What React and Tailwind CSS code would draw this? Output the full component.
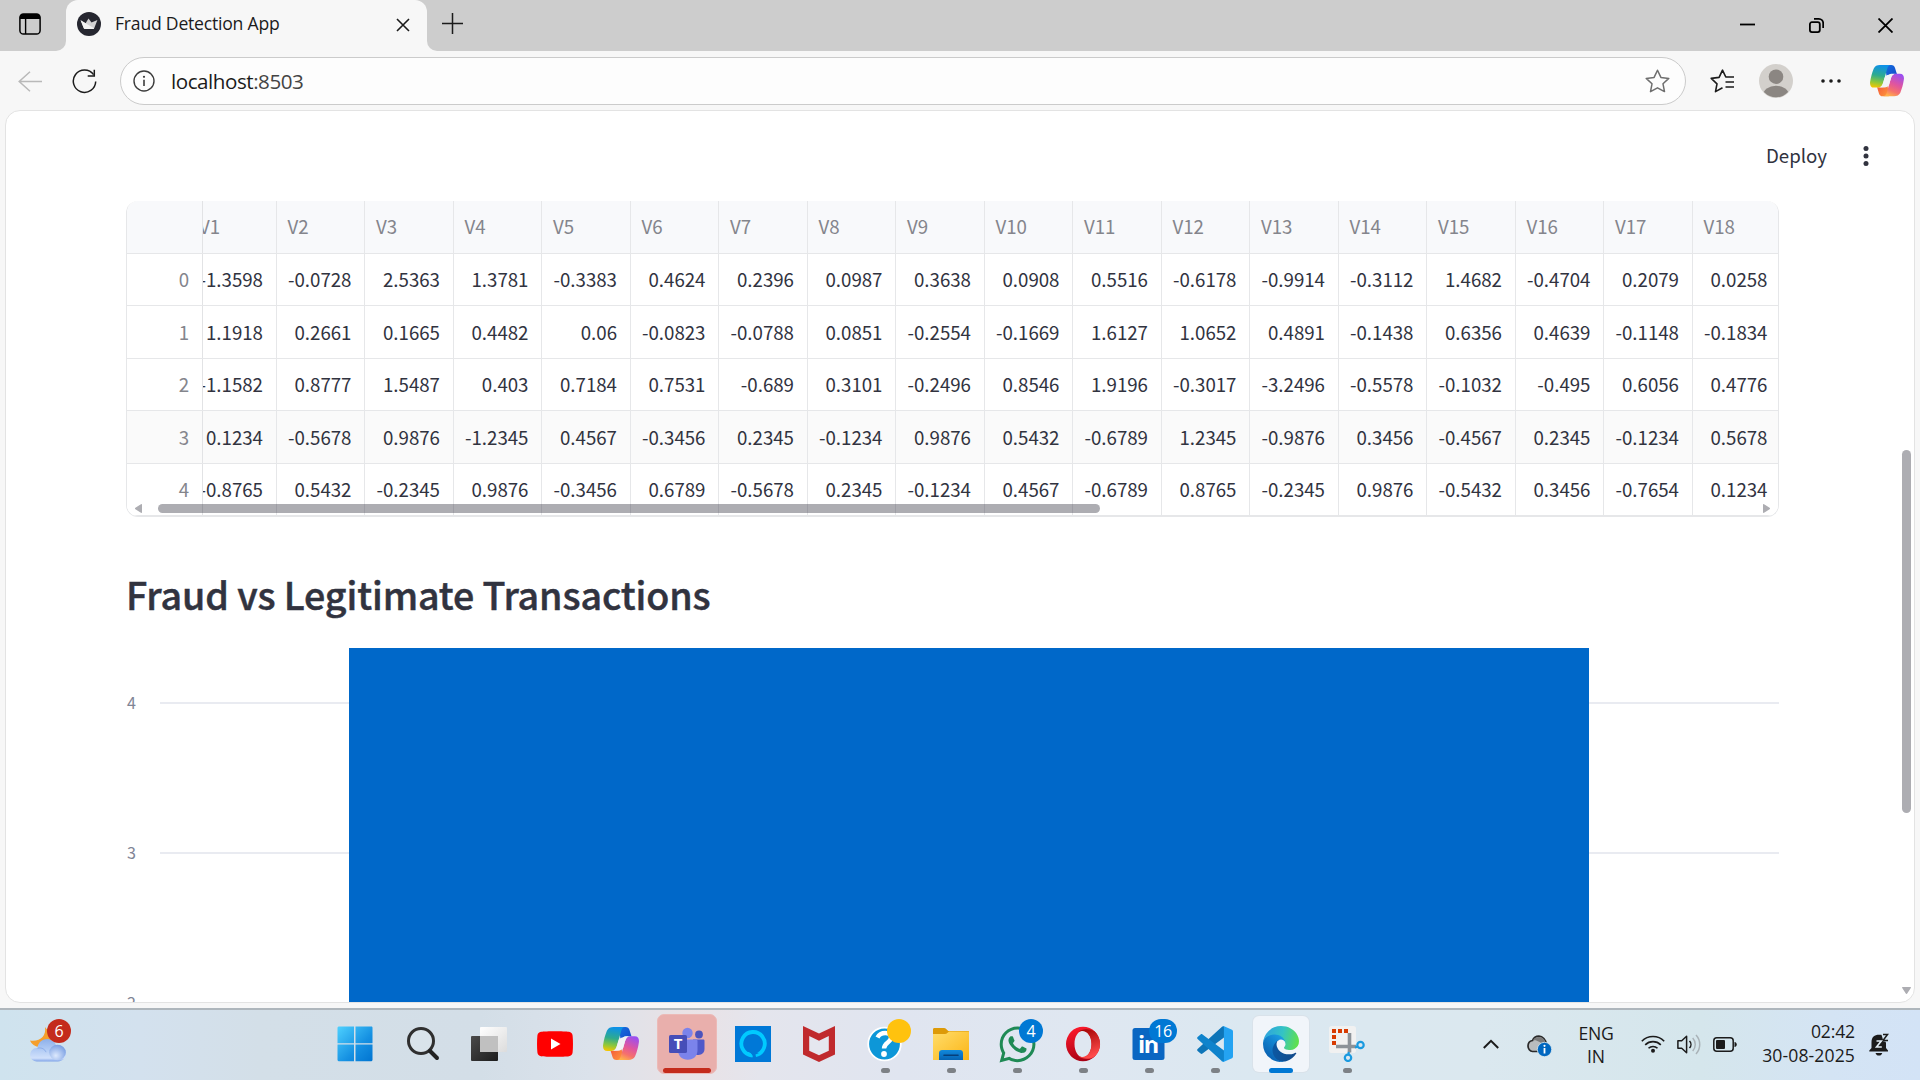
import React from "react";
import { FaWhatsapp } from "react-icons/fa";

const columns = Array.from({ length: 18 }, (_, i) => `V${i + 1}`);

const rows = [
  ["-1.3598", "-0.0728", "2.5363", "1.3781", "-0.3383", "0.4624", "0.2396", "0.0987", "0.3638", "0.0908", "0.5516", "-0.6178", "-0.9914", "-0.3112", "1.4682", "-0.4704", "0.2079", "0.0258"],
  ["1.1918", "0.2661", "0.1665", "0.4482", "0.06", "-0.0823", "-0.0788", "0.0851", "-0.2554", "-0.1669", "1.6127", "1.0652", "0.4891", "-0.1438", "0.6356", "0.4639", "-0.1148", "-0.1834"],
  ["-1.1582", "0.8777", "1.5487", "0.403", "0.7184", "0.7531", "-0.689", "0.3101", "-0.2496", "0.8546", "1.9196", "-0.3017", "-3.2496", "-0.5578", "-0.1032", "-0.495", "0.6056", "0.4776"],
  ["0.1234", "-0.5678", "0.9876", "-1.2345", "0.4567", "-0.3456", "0.2345", "-0.1234", "0.9876", "0.5432", "-0.6789", "1.2345", "-0.9876", "0.3456", "-0.4567", "0.2345", "-0.1234", "0.5678"],
  ["-0.8765", "0.5432", "-0.2345", "0.9876", "-0.3456", "0.6789", "-0.5678", "0.2345", "-0.1234", "0.4567", "-0.6789", "0.8765", "-0.2345", "0.9876", "-0.5432", "0.3456", "-0.7654", "0.1234"],
];

/* ---------- Browser chrome ---------- */

function TabBar() {
  return (
    <div className="flex h-[51px] shrink-0 bg-[#f7f7f7]">
      <div className="flex w-[66px] items-center rounded-br-[10px] bg-[#cdcdcd] pl-[19px] pb-[3px]">
        <svg width="22" height="22" viewBox="0 0 22 22" fill="none">
          <rect x="0.9" y="0.9" width="20.2" height="20.2" rx="3.6" stroke="#000" strokeWidth="1.5" />
          <path d="M1 6V4a3 3 0 0 1 3-3h14a3 3 0 0 1 3 3v2z" fill="#000" />
          <path d="M6.6 5.5V21" stroke="#000" strokeWidth="1.4" />
        </svg>
      </div>
      <div className="w-[361px] bg-[#cdcdcd]">
        <div className="flex h-full items-center rounded-t-[12px] bg-[#f7f7f7] pl-[11px] pr-[17px] pb-[3px]">
          <svg width="24" height="24" viewBox="0 0 24 24">
            <circle cx="12" cy="12" r="12" fill="#262730" />
            <path d="M3.6 8.2l5 3 2.900-4.600 3 4 5.900-2.700-2.900 7.600c-.3 1.100-1 1.600-2 1.600H8.400c-1 0-1.500-.5-1.800-1.400z" fill="#d2d2d4" />
            <path d="M8.600 11.200l8.500 5c-.4.7-1 .9-1.600.9H8.400c-1 0-1.500-.5-1.800-1.400L3.600 8.200z" fill="#f3f3f3" />
          </svg>
          <span className="ml-[14px] mb-[2px] whitespace-nowrap text-[17.6px] tracking-[-0.22px] text-[#1b1b1b]">Fraud Detection App</span>
          <svg className="ml-auto mt-[2px]" width="14" height="14" viewBox="0 0 14 14" stroke="#1b1b1b" strokeWidth="1.6">
            <path d="M1 1l12 12M13 1L1 13" />
          </svg>
        </div>
      </div>
      <div className="flex grow items-center rounded-bl-[10px] bg-[#cdcdcd] pb-[4px] pl-[15px] pr-[27px]">
        <svg width="21" height="21" viewBox="0 0 21 21" stroke="#1b1b1b" strokeWidth="1.5">
          <path d="M10.5 0v21M0 10.5h21" />
        </svg>
        <div className="mt-[3px] ml-auto flex items-center gap-[54px]">
          <svg width="15" height="15" viewBox="0 0 15 15" stroke="#000" strokeWidth="1.8"><path d="M0 6.500h15" /></svg>
          <svg width="15" height="15" viewBox="0 0 15 15" fill="none" stroke="#000" strokeWidth="1.8">
            <rect x="0.9" y="4.200" width="9.900" height="9.900" rx="2" />
            <path d="M5 .9h4.800a4.400 4.400 0 0 1 4.400 4.400V10" />
          </svg>
          <svg width="15" height="15" viewBox="0 0 15 15" stroke="#000" strokeWidth="1.8"><path d="M.5.5l14 14M14.500.5l-14 14" /></svg>
        </div>
      </div>
    </div>
  );
}

function CopilotIcon({ size, id }) {
  return (
    <svg width={size} height={size * 0.92} viewBox="0 0 36 33" className="shrink-0">
      <defs>
        <linearGradient id={`${id}a`} x1="0.4" y1="0" x2="0.25" y2="1">
          <stop offset="0" stopColor="#0d91e8" />
          <stop offset="0.45" stopColor="#2eab8e" />
          <stop offset="0.75" stopColor="#8cc73c" />
          <stop offset="1" stopColor="#f7c600" />
        </linearGradient>
        <linearGradient id={`${id}b`} x1="0.7" y1="0" x2="0.3" y2="1">
          <stop offset="0" stopColor="#9b4ff0" />
          <stop offset="0.45" stopColor="#e0559f" />
          <stop offset="0.75" stopColor="#f5716c" />
          <stop offset="1" stopColor="#ffb24a" />
        </linearGradient>
        <linearGradient id={`${id}c`} x1="0" y1="0" x2="1" y2="1">
          <stop offset="0" stopColor="#1470e0" />
          <stop offset="1" stopColor="#1447c8" />
        </linearGradient>
        <linearGradient id={`${id}d`} x1="0" y1="0" x2="1" y2="1">
          <stop offset="0" stopColor="#f2503b" />
          <stop offset="1" stopColor="#ff9a3c" />
        </linearGradient>
      </defs>
      <path d="M16 0h6.500c2.200 0 3.400 1.100 4 3l2 6.500h-5c-3.200 0-4.800 1.300-5.800 4.500z" fill={`url(#${id}c)`} />
      <path d="M20 33h-6.500c-2.200 0-3.400-1.100-4-3l-2-6.500h5c3.200 0 4.800-1.300 5.800-4.500z" fill={`url(#${id}d)`} />
      <path d="M10.500 0H22c-2 0-3 1.500-3.600 3.300L14 18.500c-1 3.400-2.400 5.400-5.800 5.400H4.300C1 23.900-.3 21.500.1 18c.8-5.500 2.100-10 3.800-14.200C5.200 1 7.500 0 10.500 0z" fill={`url(#${id}a)`} />
      <path d="M25.500 33H14c2 0 3-1.500 3.600-3.300L22 14.500c1-3.400 2.400-5.300 5.800-5.300h3.900c3.300 0 4.600 2.400 4.200 5.900-.8 5.500-2.100 10-3.800 14.200C30.800 32 28.500 33 25.500 33z" fill={`url(#${id}b)`} />
      <path d="M19.800 10.400c1-.8 2.200-1.200 3.900-1.200h4c-3.300 0-4.700 1.900-5.700 5.300l-1.700 6c-1 2.200-2.600 3-5 3.300H8.500c3.200 0 4.600-2 5.500-5.300l1.300-4.500c.8-2.300 2.300-3.400 4.500-3.600z" fill="#f1f3f6" />
    </svg>
  );
}

function Toolbar() {
  return (
    <div className="flex h-[59px] shrink-0 items-start bg-[#f7f7f7] pt-[6px] pl-[18px] pr-[16px]">
      <div className="flex h-[48px] items-center">
        <svg width="24" height="21" viewBox="0 0 24 21" fill="none" stroke="#b9b9b9" strokeWidth="1.5">
          <path d="M12 .7L1.200 10.500 12 20.300M1.200 10.500H24" />
        </svg>
        <svg className="ml-[30px]" width="25" height="25" viewBox="0 0 25 25" fill="none" stroke="#1b1b1b" strokeWidth="1.5">
          <path d="M21.600 5.600A11.200 11.200 0 1 0 23.700 12.500" />
          <path d="M22.300 .8V7h-6.600" />
        </svg>
      </div>
      <div className="ml-[23px] flex h-[48px] w-[1566px] items-center rounded-full border border-[#cbcbcb] bg-[#fdfdfd] pl-[12px] pr-[15px]">
        <svg width="22" height="22" viewBox="0 0 22 22" fill="none">
          <circle cx="11" cy="11" r="10" stroke="#3c3c3c" strokeWidth="1.4" />
          <path d="M11 9.800V16" stroke="#3c3c3c" strokeWidth="1.6" />
          <circle cx="11" cy="6.800" r="1.100" fill="#3c3c3c" />
        </svg>
        <span className="ml-[16px] text-[20.6px] tracking-[-0.46px] text-[#1b1b1b]">localhost<span className="text-[#444]">:8503</span></span>
        <svg className="ml-auto" width="25" height="24" viewBox="0 0 25 24" fill="none" stroke="#6e6e6e" strokeWidth="1.5" strokeLinejoin="round">
          <path d="M12.500 1.200l3.400 7.200 7.900 1-5.800 5.400 1.500 7.800-7-3.800-7 3.800L7 14.800 1.200 9.400l7.900-1z" />
        </svg>
      </div>
      <div className="flex h-[48px] items-center">
        <svg className="ml-[24px]" width="25" height="24" viewBox="0 0 25 24" fill="none" stroke="#1b1b1b" strokeWidth="1.6" strokeLinejoin="round">
          <path d="M24 8h-8.200L12.500 1.200 9.100 8.400l-7.900 1L7 14.800l-1.500 7.800 7-3.800M15.500 13H24M15.500 18H24" />
        </svg>
        <svg className="ml-[24px]" width="34" height="34" viewBox="0 0 34 34">
          <clipPath id="avatar"><circle cx="17" cy="17" r="16.300" /></clipPath>
          <circle cx="17" cy="17" r="17" fill="#d3d0cc" />
          <circle cx="17" cy="12.700" r="7.300" fill="#8b8682" />
          <ellipse cx="17" cy="31.500" rx="13" ry="9.800" fill="#8b8682" clipPath="url(#avatar)" />
        </svg>
        <svg className="ml-[28px]" width="20" height="4" viewBox="0 0 20 4" fill="#1b1b1b">
          <circle cx="2" cy="2" r="1.800" /><circle cx="10" cy="2" r="1.800" /><circle cx="18" cy="2" r="1.800" />
        </svg>
        <div className="ml-[29px]"><CopilotIcon size={34} id="top" /></div>
      </div>
    </div>
  );
}

/* ---------- Page content ---------- */

function DataTable() {
  return (
    <div className="relative h-[316px] w-[1653px] overflow-hidden rounded-[12px] border border-t-0 border-[#e6e7e9] text-[18.7px] text-[#31333f]">
      <div className="flex h-[52.5px] border-b border-[#e6e7e9] bg-[#f8f9fb] text-[#84858c]">
        <div className="w-[76px] shrink-0 border-r border-[#e2e3e5]" />
        <div className="flex overflow-hidden">
          {columns.map((c, i) => (
            <div key={c} className={`flex w-[88.5px] shrink-0 items-center border-r border-[#e6e7e9] pb-[1px] pl-[11px] ${i === 0 ? "-ml-[15px]" : ""}`}>
              {c}
            </div>
          ))}
        </div>
      </div>
      {rows.map((r, ri) => (
        <div key={ri} className={`flex h-[52.5px] border-b border-[#e6e7e9] ${ri === 3 ? "bg-[#fafafa]" : "bg-white"}`}>
          <div className="flex w-[76px] shrink-0 items-center justify-end border-r border-[#e2e3e5] pr-[13px] text-[#84858c]">{ri}</div>
          <div className="flex overflow-hidden">
            {r.map((v, i) => (
              <div key={i} className={`flex w-[88.5px] shrink-0 items-center justify-end border-r border-[#e6e7e9] pr-[12.5px] ${i === 0 ? "-ml-[15px]" : ""}`}>
                {v}
              </div>
            ))}
          </div>
        </div>
      ))}
      <div className="absolute bottom-[3px] left-[8px] right-[8px] flex h-[9px] items-center">
        <svg width="7" height="9" viewBox="0 0 7 9" fill="#adadb2"><path d="M7 0v9L5.500 8.500.4 5.200a.8.800 0 0 1 0-1.400L5.500.5z" /></svg>
        <div className="ml-[16px] h-[9px] w-[942px] rounded-full bg-[#31333f]/40" />
        <svg className="ml-auto" width="7" height="9" viewBox="0 0 7 9" fill="#adadb2"><path d="M0 0v9l1.500-.5 5.100-3.300a.8.800 0 0 0 0-1.400L1.500.5z" /></svg>
      </div>
    </div>
  );
}

function GridLine({ label }) {
  return (
    <div className="flex h-[150px] items-start">
      <span className="w-[34px] shrink-0 pl-[1px] text-[16.1px] leading-[18px] text-[#808495]">{label}</span>
      <div className="mt-[9px] h-[2px] grow bg-[#e9ebf1]" />
    </div>
  );
}

function BarChart() {
  return (
    <div className="relative mt-[24px] h-[356px] w-[1653px] overflow-hidden">
      <div className="pt-[45px]">
        <GridLine label="4" />
        <GridLine label="3" />
        <GridLine label="2" />
      </div>
      <div className="absolute top-0 bottom-0 left-[223px] w-[1240px] bg-[#0068c9]" />
    </div>
  );
}

function Page() {
  return (
    <div className="mx-[5px] flex h-[893px] shrink-0 overflow-hidden rounded-[15px] border border-[#e3e3e3] bg-white font-['Noto_Sans_CJK_SC',sans-serif] text-[#31333f]">
      <div className="w-[1773px] pl-[120px]">
        <div className="flex h-[90px] w-[1760px] items-center justify-end">
          <span className="mr-[35px] mb-[2px] w-[62px] text-[18.7px]">Deploy</span>
          <svg className="mr-[17px]" width="6" height="20" viewBox="0 0 6 20" fill="#31333f">
            <circle cx="3" cy="2.500" r="2.500" /><circle cx="3" cy="10" r="2.500" /><circle cx="3" cy="17.500" r="2.500" />
          </svg>
        </div>
        <DataTable />
        <h2 className="mt-[47px] h-[60px] whitespace-nowrap text-[37.6px] leading-[60px] font-medium tracking-[-0.11px] [-webkit-text-stroke:0.5px_#31333f]">Fraud vs Legitimate Transactions</h2>
        <BarChart />
      </div>
      <div className="ml-auto flex w-[12px] flex-col items-center pr-[3px]">
        <div className="mt-[339px] h-[363px] w-[9px] shrink-0 rounded-full bg-[#adadb2]" />
        <svg className="mt-auto mb-[8px]" width="9" height="7" viewBox="0 0 9 7" fill="#adadb2"><path d="M0 0h9L8.500 1.500 5.200 6.600a.8.800 0 0 1-1.400 0L.5 1.500z" /></svg>
      </div>
    </div>
  );
}

/* ---------- Taskbar ---------- */

const StartIcon = () => (
  <svg width="36" height="36" viewBox="0 0 36 36">
    <defs><linearGradient id="win" x1="0" y1="0" x2="36" y2="36" gradientUnits="userSpaceOnUse"><stop stopColor="#4fd2ff" /><stop offset="0.6" stopColor="#1590e2" /><stop offset="1" stopColor="#0073d0" /></linearGradient></defs>
    <path d="M1.500.5H17v16.700H.5V1.500zM18.500.5H35l.5 1v15.700h-17zM.5 18.500H17v16.700H1.500l-1-1zM18.500 18.500h17v15.700l-1 1h-16z" fill="url(#win)" />
  </svg>
);

const SearchIcon = () => (
  <svg width="34" height="36" viewBox="0 0 34 36" fill="none" strokeLinecap="round">
    <circle cx="15" cy="15" r="12.500" stroke="#2f2f2f" strokeWidth="3" fill="#fff" fillOpacity="0.15" />
    <path d="M24 25l7 7" stroke="#222" strokeWidth="4" />
  </svg>
);

const TaskViewIcon = () => (
  <svg width="36" height="36" viewBox="0 0 36 36">
    <defs>
      <linearGradient id="tv" x1="0" y1="0" x2="1" y2="1"><stop stopColor="#4a4a4a" /><stop offset="1" stopColor="#1c1c1c" /></linearGradient>
      <linearGradient id="tw" x1="0" y1="0" x2="1" y2="1"><stop stopColor="#fff" /><stop offset="1" stopColor="#dcdcdc" /></linearGradient>
    </defs>
    <rect x="0" y="10" width="27" height="25" rx="1" fill="url(#tv)" />
    <rect x="9" y="1" width="27" height="25" rx="1" fill="url(#tw)" />
    <rect x="9" y="10" width="18" height="16" fill="#c0c0c0" />
  </svg>
);

const YouTubeIcon = () => (
  <svg width="36" height="36" viewBox="0 0 36 36">
    <path d="M4 5.800c5-.8 23-.8 28 0 2 .3 3.300 1.500 3.600 3.700.5 5 .5 12 0 17-.3 2.200-1.600 3.400-3.600 3.700-5 .8-23 .8-28 0-2-.3-3.300-1.500-3.600-3.700-.5-5-.5-12 0-17C.7 7.300 2 6.100 4 5.800z" fill="#f00" />
    <path d="M14 12.500l9.500 5.500-9.500 5.500z" fill="#fff" />
  </svg>
);

const TeamsIcon = () => (
  <svg width="36" height="36" viewBox="0 0 36 36">
    <circle cx="30" cy="8.500" r="3.900" fill="#4b53bc" />
    <circle cx="18.500" cy="7" r="5.200" fill="#7b83eb" />
    <path d="M24 13.500h10.200c.8 0 1.300.5 1.300 1.300v8c0 4-2.700 6.200-6 6.200S24 27 24 23z" fill="#5059c9" />
    <path d="M9 13.500h18c1 0 1.500.6 1.500 1.500v9c0 6-4 9.800-9.700 9.800S9 30 9 24z" fill="#7b83eb" />
    <rect x="0" y="9" width="18" height="18" rx="1.600" fill="#464eb8" />
    <text x="9" y="23.200" textAnchor="middle" fill="#fff" fontSize="15" fontWeight="700" fontFamily="Open Sans">T</text>
  </svg>
);

const AlexaIcon = () => (
  <svg width="36" height="36" viewBox="0 0 36 36">
    <path d="M0 0h36v36H0z" fill="#0078d7" />
    <path d="M16.700 29.300A11.700 11.700 0 1 1 20.600 29.100" fill="none" stroke="#00caff" strokeWidth="3.800" />
    <path d="M16.300 31c.3-3.200-.4-4-2.300-5l4-1 6 2-6 2.500z" fill="#0078d7" />
    <path d="M14.900 30.900c1 .2 2 .3 3 .3-.2-2.500-1.400-4-4.500-5.300l-2.200.6z" fill="#00caff" />
  </svg>
);

const McAfeeIcon = () => (
  <svg width="36" height="36" viewBox="0 0 36 36">
    <path d="M2 0l16 7.500L34 0v28.500L18 36 2 28.500z" fill="#c02a2d" />
    <path d="M8.200 10L18 14.700 27.800 10v14.700L18 29.300 8.200 24.700z" fill="#e5e7ef" />
  </svg>
);

const HelpIcon = () => (
  <svg width="36" height="36" viewBox="0 0 36 36" className="overflow-visible">
    <circle cx="17.500" cy="18" r="16.300" fill="#0d97d8" stroke="#fff" strokeWidth="1.800" />
    <path d="M10.500 11.500c3-6 13.500-6 13.500 0 0 5-7 5-7 11" fill="none" stroke="#fff" strokeWidth="4.400" />
    <circle cx="17" cy="28" r="2.900" fill="#fff" />
  </svg>
);

const FolderIcon = () => (
  <svg width="36" height="36" viewBox="0 0 36 36">
    <defs><linearGradient id="fold" x1="0" y1="0" x2="1" y2="1"><stop stopColor="#ffdd6b" /><stop offset="1" stopColor="#fbb516" /></linearGradient><linearGradient id="fold2" x1="0" y1="0" x2="0" y2="1"><stop stopColor="#1189dc" /><stop offset="1" stopColor="#0664b4" /></linearGradient></defs>
    <path d="M0 3.500C0 2.500.6 2 1.500 2H11c1 0 1.600.4 2.200 1l2 2H35c.7 0 1 .4 1 1v6H0z" fill="#dd9a08" />
    <path d="M0 8h12c1 0 1.700-.3 2.300-.9L16 5.500h19c.7 0 1 .3 1 1V34H0z" fill="url(#fold)" />
    <path d="M6 34V27c0-2 1.300-3 3-3h18c1.800 0 3 1 3 3v7z" fill="url(#fold2)" />
    <path d="M11 29.300h14" stroke="#063f7a" strokeWidth="1.600" strokeLinecap="round" />
  </svg>
);

const WhatsAppIcon = () => <FaWhatsapp size={41} color="#1f8a55" />;

const OperaIcon = () => (
  <svg width="36" height="36" viewBox="0 0 36 36">
    <defs>
      <linearGradient id="op1" x1="0.2" y1="0" x2="0.5" y2="1"><stop stopColor="#ff1b2d" /><stop offset="1" stopColor="#a70014" /></linearGradient>
      <linearGradient id="op2" x1="0" y1="0" x2="0.3" y2="1"><stop stopColor="#9c0000" /><stop offset="1" stopColor="#ff4b4b" /></linearGradient>
    </defs>
    <path fillRule="evenodd" d="M18 .8a17 17.200 0 1 0 0 34.400 17 17.200 0 1 0 0-34.400zM18 4.800c5 0 8.500 6 8.500 13.200S23 31.200 18 31.200 9.500 25.200 9.500 18 13 4.800 18 4.800z" fill="url(#op1)" />
    <path d="M13.500 5.900C16.600 2.700 24 2 29.500 5.300A17.200 17.200 0 0 1 29.500 30.700C24 34 16.600 33.300 13.500 30.100c6.500 3.300 13-2.600 13-12.100s-6.500-15.400-13-12.100z" fill="url(#op2)" />
  </svg>
);

const LinkedInIcon = () => (
  <svg width="36" height="36" viewBox="0 0 36 36">
    <rect x="1.500" y="2" width="32" height="32" rx="2.500" fill="#0a66c2" />
    <text x="17" y="27" textAnchor="middle" fill="#fff" fontSize="23.500" fontWeight="700" fontFamily="Open Sans" letterSpacing="-1.200">in</text>
  </svg>
);

const CodeIcon = () => (
  <svg width="36" height="36" viewBox="0 0 36 36">
    <path d="M27 0v11.500L5.500 27.600c-.6.5-1.300.5-1.900 0L.6 24.900c-.6-.6-.6-1.400 0-2L25 .8z" fill="#0e75b8" />
    <path d="M27 36V24.500L5.500 8.400c-.6-.5-1.300-.5-1.900 0L.6 11.100c-.6.6-.6 1.400 0 2L25 35.200z" fill="#0f83cc" />
    <path d="M26.500 0L35 3.800c.7.300 1 .9 1 1.600v25.200c0 .7-.3 1.300-1 1.600L26.500 36c-1 .2-1.500 0-2-.5 1 .4 2.400 0 2.400-1.300V1.800c0-1.300-1.400-1.700-2.400-1.300.5-.5 1-.7 2-.5z" fill="#24a3f2" />
  </svg>
);

const EdgeIcon = () => (
  <svg width="36" height="36" viewBox="0 0 256 256">
    <defs>
      <linearGradient id="e1" x1="58" y1="177" x2="236" y2="177" gradientUnits="userSpaceOnUse"><stop stopColor="#0c59a4" /><stop offset="1" stopColor="#114a8b" /></linearGradient>
      <linearGradient id="e2" x1="150" y1="90" x2="40" y2="220" gradientUnits="userSpaceOnUse"><stop stopColor="#1b9de2" /><stop offset="0.4" stopColor="#1384d0" /><stop offset="1" stopColor="#0b63b3" /></linearGradient>
      <linearGradient id="e3" x1="20" y1="60" x2="250" y2="120" gradientUnits="userSpaceOnUse"><stop stopColor="#2ea5dd" /><stop offset="0.5" stopColor="#34c3c5" /><stop offset="1" stopColor="#5fe04e" /></linearGradient>
    </defs>
    <g transform="translate(-4.600 -4.900)">
      <path d="M235.700 195.500a93.700 93.700 0 0 1-10.600 4.700 101.900 101.900 0 0 1-35.900 6.400c-47.300 0-88.500-32.500-88.500-74.300a31.500 31.500 0 0 1 16.400-27.300c-42.800 1.800-53.800 46.400-53.800 72.500 0 74 68.100 81.400 82.800 81.400 7.900 0 19.800-2.300 27-4.600l1.300-.4a128.300 128.300 0 0 0 66.600-52.800 4 4 0 0 0-5.300-5.600z" fill="url(#e1)" />
      <path d="M110.300 246.300A79.200 79.200 0 0 1 87.600 225a80.700 80.700 0 0 1 29.500-120c3.200-1.500 8.500-4.100 15.600-4a32.400 32.400 0 0 1 25.700 13 31.900 31.900 0 0 1 6.300 18.700c0-.2 24.500-79.600-80-79.600-43.900 0-80 41.600-80 78.200a130.200 130.200 0 0 0 12.100 56 128 128 0 0 0 156.400 67 75.500 75.500 0 0 1-62.800-8z" fill="url(#e2)" />
      <path d="M156.900 153.800c-.8 1-3.400 2.500-3.400 5.600 0 2.600 1.700 5.200 4.800 7.300 14.300 10 41.400 8.600 41.500 8.600a59.600 59.600 0 0 0 30.300-8.300 61.400 61.400 0 0 0 30.400-52.900c.3-22.400-8-37.300-11.300-43.900C228 28.800 182.300 4.900 132.600 4.900a128 128 0 0 0-128 126.200c.5-36.500 36.800-66 80-66 3.500 0 23.500.3 42 10a72.600 72.600 0 0 1 30.900 29.300c6.100 10.600 7.200 24.100 7.200 29.500s-2.700 13.300-7.800 19.900z" fill="url(#e3)" />
    </g>
  </svg>
);

const SnipIcon = () => (
  <svg width="36" height="36" viewBox="0 0 36 36">
    <rect x="0" y="0" width="27" height="27" rx="2.500" fill="#f1f1f1" />
    <g fill="#d83b01">
      <path d="M3 3h4v4H3zM9 3h4v4H9zM15 3h4v4h-4zM3 9h4v4H3zM3 15h4v4H3z" />
    </g>
    <path d="M20.500 7v19.500M7 20.500h20" stroke="#8c9298" strokeWidth="3.600" fill="none" />
    <circle cx="31.500" cy="19" r="3.200" fill="none" stroke="#1a9ae0" strokeWidth="2.200" />
    <circle cx="19" cy="31.800" r="3.200" fill="none" stroke="#1a9ae0" strokeWidth="2.200" />
    <path d="M26 21.500l3-1M19.800 26l-.4 3" stroke="#1a9ae0" strokeWidth="2.200" />
  </svg>
);

function Slot({ children, indicator, tile, badge }) {
  return (
    <div className="relative flex h-[60px] w-[66px] flex-col items-center justify-center">
      <div className={`flex items-center justify-center ${tile || "h-[60px] w-[60px]"}`}>{children}</div>
      {indicator && <div className={`absolute bottom-[1px] h-[5px] rounded-full ${indicator}`} />}
      {badge}
    </div>
  );
}

const dot = "w-[9px] bg-[#7d8186]";

function CountBadge({ children, className }) {
  return (
    <div className={`absolute top-[5px] flex h-[24px] items-center justify-center rounded-full text-[16px] leading-[24px] text-white ${className}`}>
      {children}
    </div>
  );
}

function Weather() {
  return (
    <div className="relative ml-[30px] mt-[9px] h-[44px] w-[42px] shrink-0">
      <svg className="mt-[8px]" width="36" height="35" viewBox="0 0 36 35">
        <defs>
          <linearGradient id="cl" x1="0" y1="0" x2="0" y2="1"><stop stopColor="#8db0ea" /><stop offset="0.5" stopColor="#b4cdf5" /><stop offset="0.85" stopColor="#d0e0fb" /><stop offset="1" stopColor="#7fa3e8" /></linearGradient>
          <radialGradient id="cr" cx="0.4" cy="0.7" r="0.7"><stop stopColor="#dde9fd" /><stop offset="1" stopColor="#7ba0e3" /></radialGradient>
        </defs>
        <path d="M15 0c1.500 9-5 15-15 13.500C1.500 17 5 20 10 20l12-6V4c-3 0-5-1-7-4z" fill="#f59f2c" />
        <path d="M7 34.500a6.700 6.700 0 0 1-.5-13.400h1C8 15.500 12 12 17 12c4 0 7.500 2.500 9 6 5.500-.3 10 3.700 10 8.600 0 4.500-3.500 7.900-8 7.900z" fill="url(#cl)" />
        <ellipse cx="27.500" cy="25.500" rx="8.300" ry="7.800" fill="url(#cr)" />
        <path d="M7.500 21.200c4-1 7.500 1 8.500 4" stroke="#7499df" strokeWidth="1" fill="none" opacity="0.600" />
      </svg>
      <div className="absolute left-[17px] top-0 flex h-[24px] w-[24px] items-center justify-center rounded-full bg-[#c42b1c] text-[16px] leading-[24px] text-white">6</div>
    </div>
  );
}

function Tray() {
  return (
    <div className="ml-auto flex h-[70px] items-start text-[17.6px] text-[#1b1b1b]">
      <svg className="mt-[29px]" width="16" height="10" viewBox="0 0 16 10" fill="none" stroke="#1b1b1b" strokeWidth="2"><path d="M.8 9L8 1.800 15.200 9" /></svg>
      <svg className="ml-[28px] mt-[25px]" width="25" height="22" viewBox="0 0 25 22">
        <path d="M5.500 16.500h10l4-7C19 4.500 15.500 1.200 12 1.200c-3.500 0-5.500 1.800-6.500 4.300C3 6 1 8.300 1 11s2 5.500 4.500 5.500z" fill="#b9bcbe" stroke="#2a2a2a" strokeWidth="1.700" />
        <path d="M6 5.500c4-1 6 2 12.700 4.500l.2-1C18.500 5 15.500 1.900 12 1.900S7 3.300 6 5.500z" fill="#7b7b7b" />
        <circle cx="17.500" cy="14.500" r="7.200" fill="#0067c0" stroke="#dbe8ee" strokeWidth="0.800" />
        <path d="M17.500 13v5.500" stroke="#fff" strokeWidth="1.800" /><circle cx="17.500" cy="10.800" r="1.100" fill="#fff" />
      </svg>
      <div className="ml-[17px] mt-[12px] w-[54px] text-center leading-[23px]">
        <div className="tracking-[-0.3px]">ENG</div>
        <div>IN</div>
      </div>
      <svg className="ml-[18px] mt-[25px]" width="24" height="18" viewBox="0 0 24 18" fill="none" stroke="#1b1b1b" strokeWidth="1.600">
        <path d="M.8 6.200a15.800 15.800 0 0 1 22.400 0M4.200 9.900a11 11 0 0 1 15.600 0M7.500 13.300a6.400 6.400 0 0 1 9 0" />
        <circle cx="12" cy="15.800" r="2" fill="#1b1b1b" stroke="none" />
      </svg>
      <svg className="ml-[12px] mt-[24px]" width="24" height="21" viewBox="0 0 24 21" fill="none" stroke="#1b1b1b" strokeWidth="1.500" strokeLinejoin="round">
        <path d="M.9 6.800h3.800L9.600 2.300v16.400l-4.900-4.500H.9z" />
        <path d="M12.500 7a5 5 0 0 1 0 7" />
        <path d="M15.700 4a9.500 9.500 0 0 1 0 13M19 1a14 14 0 0 1 0 19" stroke="#a9b2b7" />
      </svg>
      <svg className="ml-[12px] mt-[27px]" width="24" height="15" viewBox="0 0 24 15" fill="none" stroke="#1b1b1b" strokeWidth="1.500">
        <rect x="0.800" y="0.800" width="19.400" height="13.400" rx="3" />
        <rect x="3" y="3" width="9" height="9" rx="1" fill="#1b1b1b" stroke="none" />
        <path d="M21.500 5v5c1.600-.3 2.300-1.300 2.300-2.500S23.100 5.300 21.500 5z" fill="#1b1b1b" stroke="none" />
      </svg>
      <div className="ml-[18px] mt-[9px] w-[100px] text-right leading-[24px]">
        <div className="tracking-[-0.15px]">02:42</div>
        <div className="tracking-[0.1px]">30-08-2025</div>
      </div>
      <svg className="ml-[14px] mt-[23px]" width="20" height="23" viewBox="0 0 20 23">
        <path d="M2.500 9.500C2.500 4 5.500 1.800 10 1.800h4L17 10v5l2 2.500V18.500H.3v-1l2.200-2.500zM6.500 20h6.800c-.5 1.700-1.700 2.600-3.400 2.600s-2.900-.9-3.400-2.600z" fill="#1b1b1b" />
        <path d="M12 0h8v8.500h-5.500z" fill="#d4e5f1" />
        <path d="M14 1.500h4.500L14 7.500h5" fill="none" stroke="#1b1b1b" strokeWidth="1.500" />
        <path d="M7.500 8h4.800l-4.800 6h5.300" fill="none" stroke="#e3eef5" strokeWidth="1.600" />
      </svg>
    </div>
  );
}

function Taskbar() {
  return (
    <div className="flex h-[72px] shrink-0 items-start border-t-2 border-[#aeb6bc] bg-[linear-gradient(90deg,#cfe3ee_0px,#d3e1ee_140px,#d3dfe8_260px,#d3dee7_480px,#dbe2eb_590px,#eae2e5_690px,#e4e5ed_760px,#e0e5f0_900px,#dfe7f1_1080px,#dbe8f1_1250px,#dbe8ef_1480px,#d5e6ec_1700px,#d4e4f4_1830px,#d3e3f6_1920px)] pr-[31px]">
      <Weather />
      <div className="ml-[250px] mt-[4px] flex">
        <div className="mr-[2px]"><Slot><StartIcon /></Slot></div>
        <Slot><SearchIcon /></Slot>
        <Slot><TaskViewIcon /></Slot>
        <Slot><YouTubeIcon /></Slot>
        <Slot><CopilotIcon size={36} id="task" /></Slot>
        <Slot tile="h-[60px] w-[60px] rounded-[7px] bg-[#e9afac] border border-[#ecbab7]" indicator="w-[48px] bg-[#c42b1c]"><TeamsIcon /></Slot>
        <Slot><AlexaIcon /></Slot>
        <Slot><McAfeeIcon /></Slot>
        <Slot indicator={dot} badge={<CountBadge className="left-[35px] w-[24px] bg-[#ffc20e]" />}><HelpIcon /></Slot>
        <Slot indicator={dot}><FolderIcon /></Slot>
        <Slot indicator={dot} badge={<CountBadge className="left-[35px] w-[24px] bg-[#0078d4]">4</CountBadge>}><WhatsAppIcon /></Slot>
        <Slot indicator={dot}><OperaIcon /></Slot>
        <Slot indicator={dot} badge={<CountBadge className="left-[33px] w-[28px] bg-[#0078d4] tracking-[-0.5px]">16</CountBadge>}><LinkedInIcon /></Slot>
        <Slot indicator={dot}><CodeIcon /></Slot>
        <Slot tile="h-[56px] w-[56px] rounded-[6px] bg-[#f1f5fa] shadow-[0_0_0_1px_#d9e2ea]" indicator="w-[24px] bg-[#0078d4]"><EdgeIcon /></Slot>
        <Slot indicator={dot}><SnipIcon /></Slot>
      </div>
      <Tray />
    </div>
  );
}

export default function App() {
  return (
    <div className="flex h-[1080px] w-[1920px] flex-col overflow-hidden bg-[#f7f7f7] font-['Open_Sans',sans-serif]">
      <TabBar />
      <Toolbar />
      <Page />
      <div className="h-[5px] shrink-0" />
      <Taskbar />
    </div>
  );
}
